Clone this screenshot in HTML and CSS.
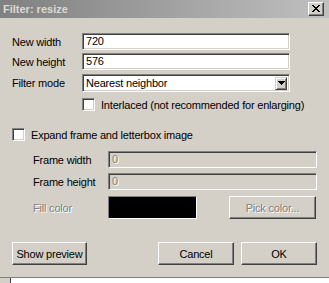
FILE: index.html
```html
<!DOCTYPE html>
<html>
<head>
<meta charset="utf-8">
<link rel="stylesheet" href="styles.css">
</head>
<body>
<div class="window">
  <div class="titlebar">
    <span class="title">Filter: resize</span>
    <span class="close">
      <svg width="8" height="7" viewBox="0 0 8 7" shape-rendering="crispEdges">
        <path d="M0 0h2v1h-2zM6 0h2v1h-2zM1 1h2v1h-2zM5 1h2v1h-2zM2 2h4v1h-4zM3 3h2v1h-2zM2 4h4v1h-4zM1 5h2v1h-2zM5 5h2v1h-2zM0 6h2v1h-2zM6 6h2v1h-2z" fill="#000"/>
      </svg>
    </span>
  </div>
  <div class="content">
    <div class="row r1">
      <span class="lbl">New width</span>
      <div class="field">720</div>
    </div>
    <div class="row r2">
      <span class="lbl">New height</span>
      <div class="field">576</div>
    </div>
    <div class="row r3">
      <span class="lbl">Filter mode</span>
      <div class="field select">
        <span class="seltext">Nearest neighbor</span>
        <span class="dropbtn">
          <svg width="7" height="4" viewBox="0 0 7 4" shape-rendering="crispEdges"><path d="M0 0h7v1h-7zM1 1h5v1h-5zM2 2h3v1h-3zM3 3h1v1h-1z" fill="#000"/></svg>
        </span>
      </div>
    </div>
    <div class="row r4">
      <span class="check"></span>
      <span class="ctext">Interlaced (not recommended for enlarging)</span>
    </div>
    <div class="row r5">
      <span class="check"></span>
      <span class="ctext">Expand frame and letterbox image</span>
    </div>
    <div class="row r6 indent">
      <span class="lbl2">Frame width</span>
      <div class="field wide disabled">0</div>
    </div>
    <div class="row r7 indent">
      <span class="lbl2">Frame height</span>
      <div class="field wide disabled">0</div>
    </div>
    <div class="row r8 indent">
      <span class="lbl2 dis">Fill color</span>
      <div class="swatch"></div>
      <div class="btn pick dis">Pick color...</div>
    </div>
    <div class="row r9">
      <div class="btn preview">Show preview</div>
      <div class="btn cancel">Cancel</div>
      <div class="btn ok">OK</div>
    </div>
  </div>
  <div class="below"><div class="belowwin"></div></div>
</div>
</body>
</html>
```

FILE: styles.css
```css
html, body {
  margin: 0;
  padding: 0;
}
body {
  width: 329px;
  height: 283px;
  overflow: hidden;
  background: #d4d0c8;
  font-family: "Liberation Sans", Arial, sans-serif;
  font-size: 11px;
  letter-spacing: -0.2px;
  color: #000;
}
.window {
  width: 329px;
  height: 283px;
  display: flex;
  flex-direction: column;
}
.titlebar {
  height: 18px;
  flex: none;
  background: linear-gradient(to right, #808080, #c0c0c0);
  display: flex;
  align-items: center;
  justify-content: space-between;
  padding: 0 5px 0 3px;
}
.title {
  color: #dcd9d2;
  font-weight: bold;
  font-size: 11px;
  letter-spacing: 0;
  line-height: 18px;
}
.close {
  width: 16px;
  height: 14px;
  box-sizing: border-box;
  background: #d4d0c8;
  border-top: 1px solid #fff;
  border-left: 1px solid #fff;
  border-right: 1px solid #404040;
  border-bottom: 1px solid #404040;
  box-shadow: inset -1px -1px #808080;
  display: flex;
  align-items: center;
  justify-content: center;
  padding-bottom: 1px;
}
.content {
  flex: 1;
  display: flex;
  flex-direction: column;
  padding: 0 12px;
}
.row {
  display: flex;
  align-items: center;
}
.r1 { margin-top: 15px; }
.r2 { margin-top: 3px; }
.r3 { margin-top: 4px; }
.r4 { margin-top: 6px; padding-left: 70px; }
.r5 { margin-top: 17px; }
.r6 { margin-top: 10px; }
.r7 { margin-top: 5px; }
.r8 { margin-top: 6px; }
.r9 { margin-top: 23px; }
.lbl {
  width: 70px;
  flex: none;
}
.indent { padding-left: 21px; }
.lbl2 {
  width: 75px;
  flex: none;
}
.dis {
  color: #808080;
  text-shadow: 1px 1px 0 #fff;
}
.field {
  width: 208px;
  height: 17px;
  box-sizing: border-box;
  background: #fff;
  border-top: 1px solid #808080;
  border-left: 1px solid #808080;
  border-right: 1px solid #fff;
  border-bottom: 1px solid #fff;
  box-shadow: inset 1px 1px #404040, inset -1px -1px #d4d0c8;
  padding: 0 3px;
  line-height: 15px;
  white-space: nowrap;
}
.field.wide { width: 209px; }
.field.disabled {
  background: #d4d0c8;
  color: #808080;
  text-shadow: 1px 1px 0 #fff;
}
.select {
  height: 18px;
  display: flex;
  align-items: center;
  justify-content: space-between;
  padding: 0 2px 0 3px;
}
.dropbtn {
  width: 12px;
  height: 13px;
  box-sizing: border-box;
  background: #d4d0c8;
  border-top: 1px solid #d4d0c8;
  border-left: 1px solid #d4d0c8;
  border-right: 1px solid #404040;
  border-bottom: 1px solid #404040;
  box-shadow: inset 1px 1px #fff, inset -1px -1px #808080;
  display: flex;
  align-items: center;
  justify-content: center;
}
.check {
  width: 13px;
  height: 13px;
  box-sizing: border-box;
  flex: none;
  background: #fff;
  border-top: 1px solid #808080;
  border-left: 1px solid #808080;
  border-right: 1px solid #fff;
  border-bottom: 1px solid #fff;
  box-shadow: inset 1px 1px #404040, inset -1px -1px #d4d0c8;
}
.ctext {
  margin-left: 6px;
  white-space: nowrap;
}
.swatch {
  width: 89px;
  height: 23px;
  box-sizing: border-box;
  background: #000;
  border-top: 1px solid #808080;
  border-left: 1px solid #808080;
  border-right: 1px solid #fff;
  border-bottom: 1px solid #fff;
}
.btn {
  height: 23px;
  box-sizing: border-box;
  background: #d4d0c8;
  border-top: 1px solid #fff;
  border-left: 1px solid #fff;
  border-right: 1px solid #404040;
  border-bottom: 1px solid #404040;
  box-shadow: inset -1px -1px #808080;
  display: flex;
  align-items: center;
  justify-content: center;
  white-space: nowrap;
}
.pick { width: 87px; margin-left: 32px; }
.preview { width: 75px; }
.cancel { width: 76px; margin-left: 71px; }
.ok { width: 76px; margin-left: 7px; }
.below {
  margin-top: auto;
  height: 5px;
  flex: none;
  border-top: 1px solid #808080;
  display: flex;
  padding-left: 10px;
  background: #d4d0c8;
}
.belowwin {
  flex: 1;
  background: #fff;
  border-left: 1px solid #404040;
}
```
